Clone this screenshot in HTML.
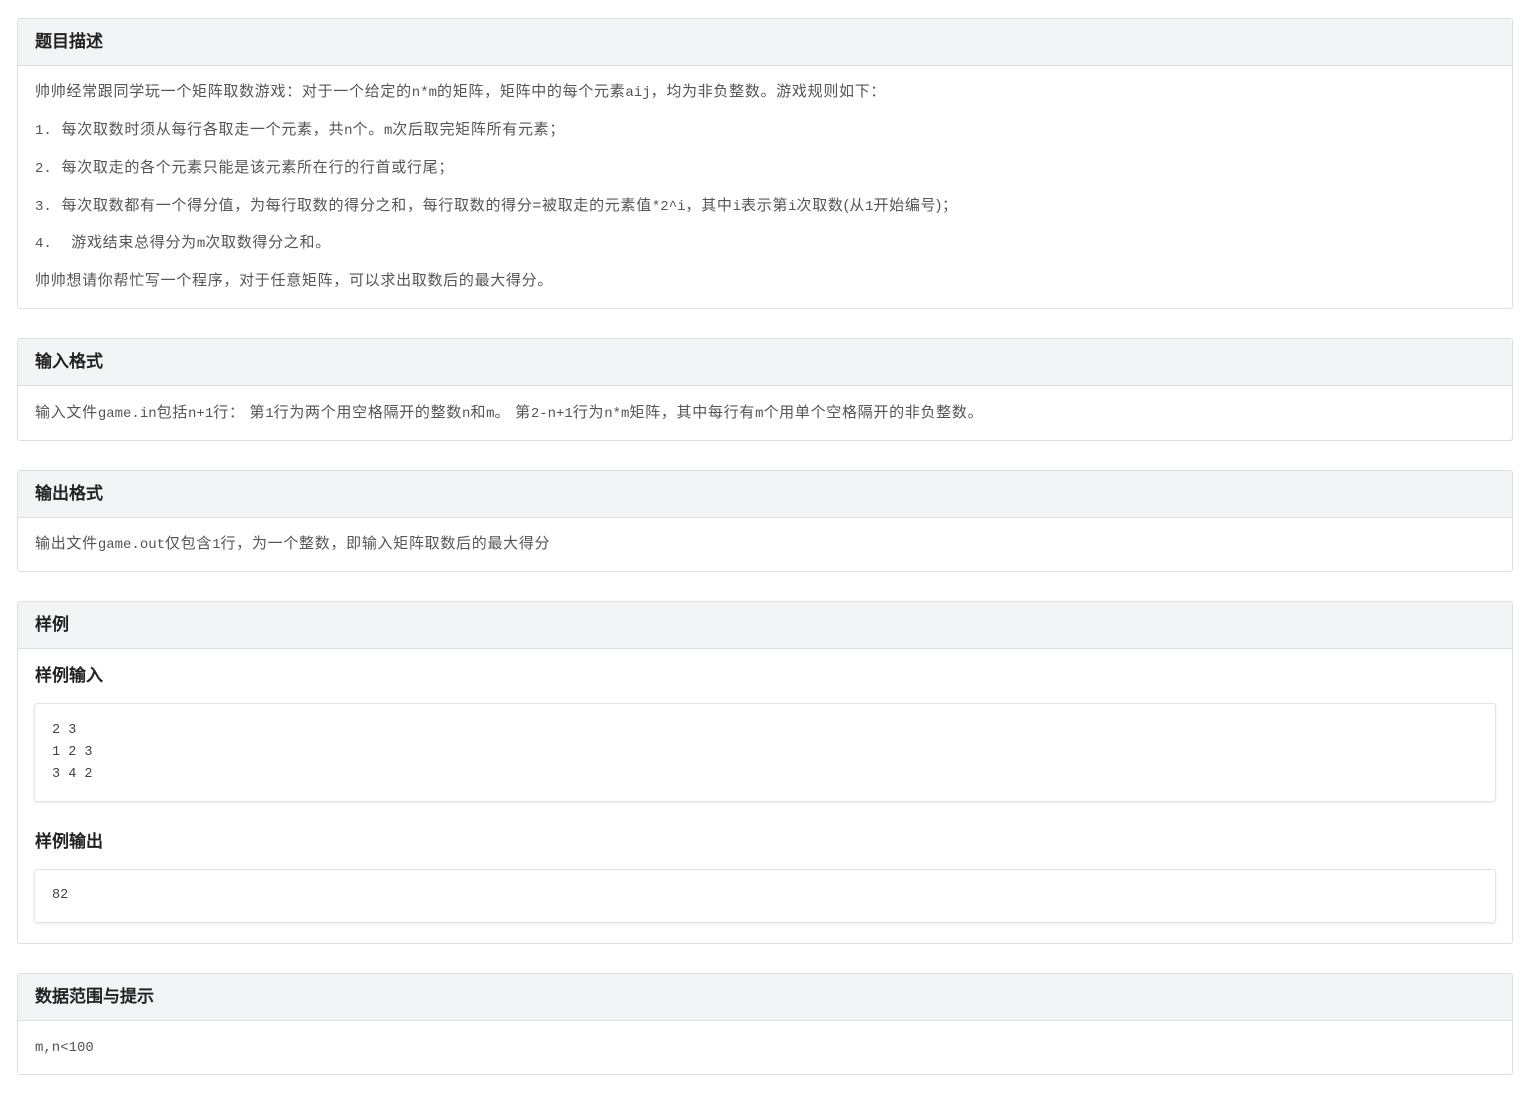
<!DOCTYPE html>
<html lang="zh-CN"><head><meta charset="utf-8"><style>
body{margin:0;background:#fff;font-family:"Liberation Sans","WenQuanYi Zen Hei",sans-serif;color:#555;font-size:15px}
.card{position:absolute;left:17px;width:1494px;border:1px solid #dcdfe3;border-radius:3px;background:#fff}
.hd{height:46px;background:#f3f4f6;border-bottom:1px solid #dcdfe3;line-height:46px;padding-left:17px;font-weight:bold;font-size:17px;color:#222}
.ln{position:absolute;left:17px;line-height:20px;white-space:nowrap;letter-spacing:0.7px}
.m{font-family:"Liberation Mono",monospace;font-size:14px;letter-spacing:0}
.p{display:inline-block;width:15.7px;text-align:left}
.sub{position:absolute;left:17px;font-weight:bold;font-size:17px;color:#222;line-height:20px}
.pre{position:absolute;left:16px;width:1460px;border:1px solid #e2e4e8;border-radius:3px;box-shadow:0 1px 2px rgba(0,0,0,.08);font-family:"Liberation Mono",monospace;font-size:13.5px;color:#444}
</style></head><body>
<div class="card" style="top:18px;height:289px"><div class="hd">题目描述</div>
<div class="ln" style="top:63px">帅帅经常跟同学玩一个矩阵取数游戏<span class="p">：</span>对于一个给定的<span class="m">n*m</span>的矩阵<span class="p">，</span>矩阵中的每个元素<span class="m">aij</span><span class="p">，</span>均为非负整数<span class="p">。</span>游戏规则如下<span class="p">：</span></div>
<div class="ln" style="top:101px"><span class="m">1.</span>&nbsp; 每次取数时须从每行各取走一个元素<span class="p">，</span>共<span class="m">n</span>个<span class="p">。</span><span class="m">m</span>次后取完矩阵所有元素<span class="p">；</span></div>
<div class="ln" style="top:139px"><span class="m">2.</span>&nbsp; 每次取走的各个元素只能是该元素所在行的行首或行尾<span class="p">；</span></div>
<div class="ln" style="top:177px"><span class="m">3.</span>&nbsp; 每次取数都有一个得分值<span class="p">，</span>为每行取数的得分之和<span class="p">，</span>每行取数的得分=被取走的元素值<span class="m">*2^i</span><span class="p">，</span>其中<span class="m">i</span>表示第<span class="m">i</span>次取数(从<span class="m">1</span>开始编号)<span class="p">；</span></div>
<div class="ln" style="top:214px"><span class="m">4.</span>&nbsp;&nbsp;&nbsp; 游戏结束总得分为<span class="m">m</span>次取数得分之和<span class="p">。</span></div>
<div class="ln" style="top:252px">帅帅想请你帮忙写一个程序<span class="p">，</span>对于任意矩阵<span class="p">，</span>可以求出取数后的最大得分<span class="p">。</span></div>
</div>
<div class="card" style="top:338px;height:101px"><div class="hd">输入格式</div>
<div class="ln" style="top:64px">输入文件<span class="m">game.in</span>包括<span class="m">n+1</span>行<span class="p">：</span> 第<span class="m">1</span>行为两个用空格隔开的整数<span class="m">n</span>和<span class="m">m</span><span class="p">。</span> 第<span class="m">2-n+1</span>行为<span class="m">n*m</span>矩阵<span class="p">，</span>其中每行有<span class="m">m</span>个用单个空格隔开的非负整数<span class="p">。</span></div>
</div>
<div class="card" style="top:470px;height:100px"><div class="hd">输出格式</div>
<div class="ln" style="top:63px">输出文件<span class="m">game.out</span>仅包含<span class="m">1</span>行<span class="p">，</span>为一个整数<span class="p">，</span>即输入矩阵取数后的最大得分</div>
</div>
<div class="card" style="top:601px;height:341px"><div class="hd">样例</div>
<div class="sub" style="top:64px">样例输入</div>
<div class="pre" style="top:101px;height:97px"><div style="position:absolute;left:17px;top:16px;line-height:22px">2 3<br>1 2 3<br>3 4 2</div></div>
<div class="sub" style="top:230px">样例输出</div>
<div class="pre" style="top:267px;height:52px"><div style="position:absolute;left:17px;top:15px;line-height:22px">82</div></div>
</div>
<div class="card" style="top:973px;height:100px"><div class="hd">数据范围与提示</div>
<div class="ln m" style="top:64px">m,n&lt;100</div>
</div>
</body></html>
